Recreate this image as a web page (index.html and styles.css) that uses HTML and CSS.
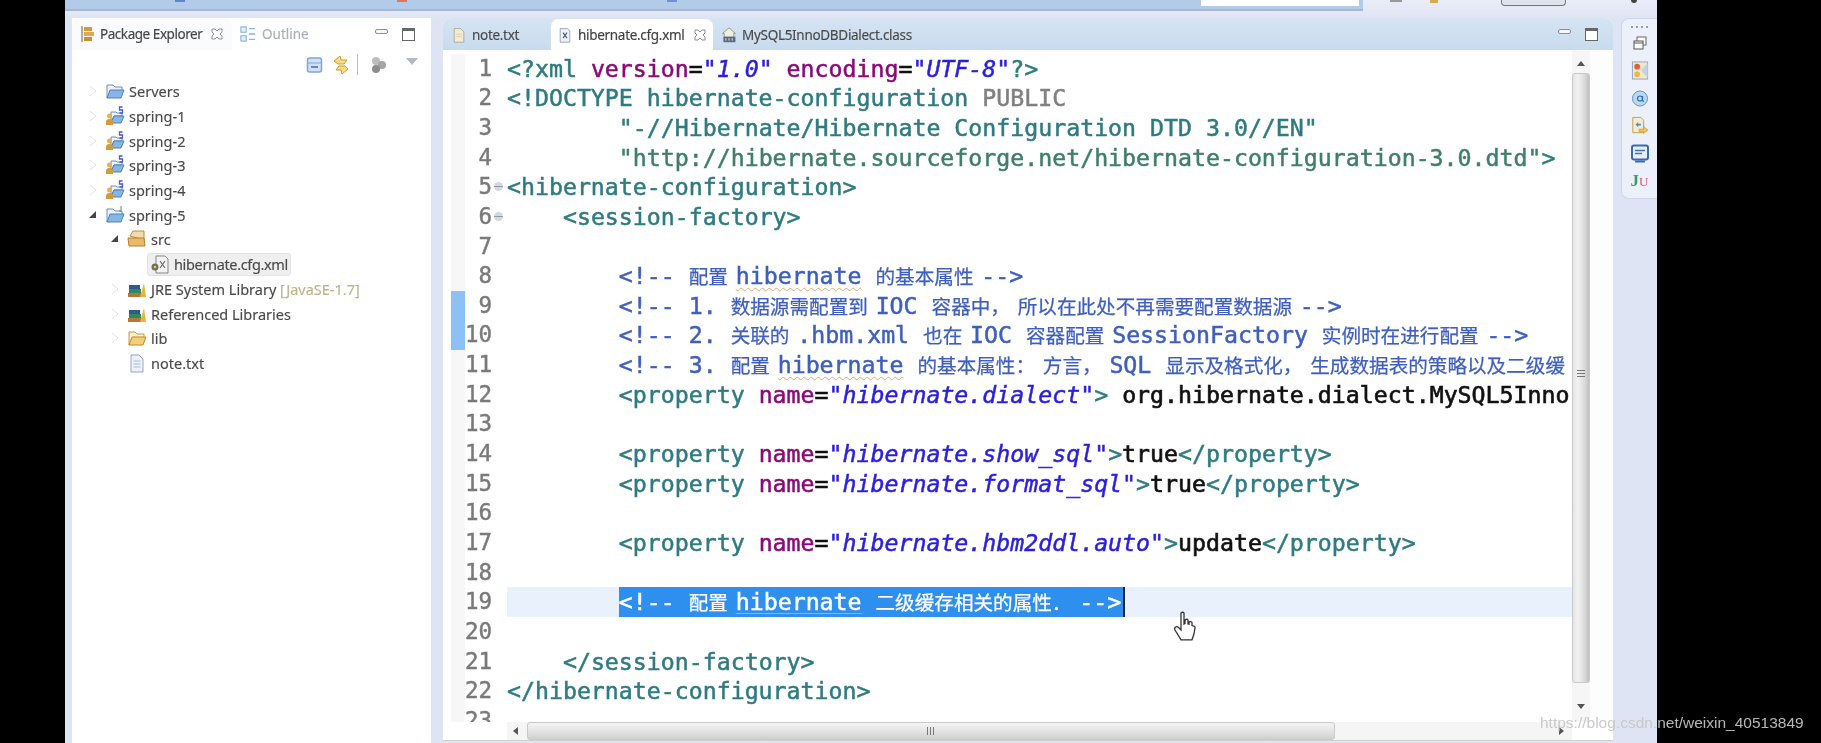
FILE: index.html
```html
<!DOCTYPE html>
<html lang="zh">
<head>
<meta charset="utf-8">
<title>hibernate.cfg.xml</title>
<link rel="stylesheet" href="styles.css">
</head>
<body>
<svg class="defs" width="0" height="0">
  <symbol id="i-folder" viewBox="0 0 20 20"><path d="M2 4h6l2 2h7v4H6l-4 7z" fill="#eef3fa" stroke="#6b8fb8"/><path d="M2 17l3-8h14l-3 8z" fill="#86b5e6" stroke="#4f82b8"/></symbol>
  <symbol id="i-spring" viewBox="0 0 20 20"><path d="M6 6h5l1 1h5v3H9l-3 6z" fill="#eef3fa" stroke="#6b8fb8"/><path d="M6 17l3-7h10l-3 7z" fill="#86b5e6" stroke="#4f82b8"/><circle cx="4.500" cy="10" r="2.500" fill="#e9b04c"/><path d="M1 19v-3q0-3 3.500-3T8 16v3z" fill="#d59a35"/><path d="M17.500 1h-3v3h3v3h-3" fill="none" stroke="#4a55d8" stroke-width="1.300"/></symbol>
  <symbol id="i-proj" viewBox="0 0 20 20"><path d="M2 4h6l2 2h7v4H6l-4 7z" fill="#eef3fa" stroke="#6b8fb8"/><path d="M2 17l3-8h14l-3 8z" fill="#86b5e6" stroke="#4f82b8"/><path d="M16 1v5h-2" fill="none" stroke="#6a7fae"/></symbol>
  <symbol id="i-src" viewBox="0 0 20 20"><path d="M3 7l3-5h11v9z" fill="#f1dcae" stroke="#b98b3d"/><path d="M1 9h16l1 8H2z" fill="#eab96a" stroke="#b57f2c"/></symbol>
  <symbol id="i-yfolder" viewBox="0 0 20 20"><path d="M2 4h6l2 2h7v4H6l-4 7z" fill="#fbf1d0" stroke="#c29a4a"/><path d="M2 17l3-8h14l-3 8z" fill="#f3cf79" stroke="#bb8a2e"/></symbol>
  <symbol id="i-lib" viewBox="0 0 20 20"><rect x="1" y="14" width="13" height="4" fill="#b5763a"/><rect x="2" y="10" width="12" height="4" fill="#2f8a5a"/><rect x="2" y="6" width="11" height="4" fill="#2c5a8e"/><path d="M13 18l4-14 2 14z" fill="#e8b23e"/></symbol>
  <symbol id="i-doc" viewBox="0 0 20 20"><path d="M4 2h8l4 4v13H4z" fill="#eef1fa" stroke="#9ba6bf"/><path d="M6.500 8h7M6.500 11h7M6.500 14h7" stroke="#a9bbdc"/></symbol>
  <symbol id="i-note" viewBox="0 0 20 20"><path d="M4 2h8l4 4v13H4z" fill="#f4ecd2" stroke="#a9a083"/><path d="M6.500 9h7M6.500 12h7" stroke="#d4c9a2"/></symbol>
  <symbol id="i-xml" viewBox="0 0 20 20"><path d="M4 2h9l3 3v14H4z" fill="#eef1f8" stroke="#8a95ab"/><path d="M7.500 7l5 7M12.500 7l-5 7" stroke="#48587a" stroke-width="1.400"/></symbol>
  <symbol id="i-cfg" viewBox="0 0 20 20"><path d="M6 2h9l3 3v14H6z" fill="#f3f3f3" stroke="#858585"/><path d="M10 7l5 7M15 7l-5 7" stroke="#6a6a6a" stroke-width="1.200"/><circle cx="5" cy="13" r="3.500" fill="#6f6f5a"/><circle cx="5" cy="13" r="1.300" fill="#e4c97f"/></symbol>
  <symbol id="i-class" viewBox="0 0 20 20"><path d="M10 1L2 8h2v5h12V8h2z" fill="#f1efe4" stroke="#8d8467"/><rect x="3" y="12" width="15" height="7" fill="#5c6a80"/><path d="M6 14v3M10 14v3M14 14v3" stroke="#fff"/></symbol>
  <symbol id="i-close" viewBox="0 0 14 14"><path d="M2 2h3l2 2 2-2h3v3l-2 2 2 2v3H9L7 10l-2 2H2V9l2-2-2-2z" fill="#fff" stroke="#8f8f8f"/></symbol>
  <symbol id="i-pkg" viewBox="0 0 16 18"><path d="M2 1v16" stroke="#7a5a30"/><rect x="4" y="2" width="8" height="4" fill="#d8963c"/><rect x="4" y="7" width="10" height="4" fill="#e3a84f"/><rect x="4" y="12" width="8" height="4" fill="#cf8c33"/></symbol>
  <symbol id="i-outline" viewBox="0 0 18 18"><rect x="1" y="1" width="6" height="6" fill="#e4effa" stroke="#6ea3d4"/><rect x="1" y="11" width="6" height="6" fill="#e4effa" stroke="#6ea3d4"/><path d="M10 3h7M10 9h7M10 15h7" stroke="#8eb5da" stroke-width="1.500"/></symbol>
  <symbol id="i-collapse" viewBox="0 0 18 18"><rect x="1.500" y="2" width="14" height="14" rx="2" fill="#cfe0f5" stroke="#7ea7d6" stroke-width="1.500"/><path d="M1.500 7h14" stroke="#7ea7d6"/><path d="M5 11h7" stroke="#4b75a8" stroke-width="1.600"/></symbol>
  <symbol id="i-link" viewBox="0 0 20 20"><path d="M3 6l6-5 1 4h6l-3 4H7z" fill="#f7dd8a" stroke="#cf9c2d"/><path d="M17 14l-6 5-1-4H5l3-4h6z" fill="#f7dd8a" stroke="#cf9c2d"/></symbol>
  <symbol id="i-balls" viewBox="0 0 18 18"><circle cx="6" cy="5" r="4" fill="#bdbdbd"/><circle cx="12" cy="9" r="4" fill="#a5a5a5"/><circle cx="6" cy="13" r="4" fill="#8c8c8c"/></symbol>
  <symbol id="i-restore" viewBox="0 0 16 16"><rect x="5" y="2" width="9" height="8" fill="#fff" stroke="#666"/><rect x="2" y="6" width="9" height="8" fill="#fff" stroke="#555"/><path d="M2 8h9" stroke="#555"/></symbol>
  <symbol id="i-persp" viewBox="0 0 18 20"><rect x="1" y="1" width="16" height="18" fill="#f6e6c4" stroke="#8fa3c4"/><circle cx="6" cy="6" r="3" fill="#e25b3c"/><circle cx="6" cy="14" r="3" fill="#e9b650"/><path d="M10 10l7-8v16z" fill="#bcd4ee"/></symbol>
  <symbol id="i-at" viewBox="0 0 18 18"><circle cx="9" cy="9" r="7.500" fill="#bcd7f0" stroke="#5d96cf"/><path d="M11.500 6.500v4q0 1.500 1.500 1M11.500 9a2.500 2.500 0 1 1-5 0 2.500 2.500 0 1 1 5 0" fill="none" stroke="#2f6fb0" stroke-width="1.200"/></symbol>
  <symbol id="i-docarrow" viewBox="0 0 20 20"><path d="M2 1h9l3 3v14H2z" fill="#f6eccb" stroke="#b59a56"/><path d="M5 9l3-3v2h3v2H8v2z" fill="#4f8fd0"/><path d="M9 14h5v-3l5 4-5 4v-2H9z" fill="#eec15a" stroke="#c2922e" stroke-width=".6"/></symbol>
  <symbol id="i-screen" viewBox="0 0 18 18"><rect x="1" y="1" width="16" height="14" rx="2" fill="#e6eef9" stroke="#3b6bae" stroke-width="2"/><path d="M4 6h10M4 9h7" stroke="#4a72ab" stroke-width="1.500"/><path d="M4 16h10v2H4z" fill="#3b6bae"/></symbol>
</svg>

<div class="app">
  <header class="topbar">
    <div class="tb-main">
      <i class="fleck f1"></i><i class="fleck f2"></i><i class="fleck f3"></i>
      <div class="search"></div>
    </div>
    <div class="tb-right">
      <i class="fleck f4"></i><i class="fleck f5"></i>
      <div class="persp-btn"></div>
      <i class="tb-dot"></i>
    </div>
  </header>

  <main class="main">
    <section class="explorer">
      <div class="ex-tabs">
        <div class="ex-tab">
          <svg class="ic16"><use href="#i-pkg"/></svg>
          <span class="ex-title">Package Explorer</span>
          <svg class="ic-close"><use href="#i-close"/></svg>
        </div>
        <div class="ex-tab2">
          <svg class="ic16"><use href="#i-outline"/></svg>
          <span class="ex-outline">Outline</span>
        </div>
        <div class="winbtns">
          <span class="minbtn"></span><span class="maxbtn"></span>
        </div>
      </div>
      <div class="ex-tools">
        <svg class="ic18"><use href="#i-collapse"/></svg>
        <svg class="ic20"><use href="#i-link"/></svg>
        <span class="tool-sep"></span>
        <svg class="ic18 bal"><use href="#i-balls"/></svg>
        <span class="menu-tri"></span>
      </div>
      <ul class="tree">
        <li class="row"><span class="tw closed"></span><svg class="ic"><use href="#i-folder"/></svg><span>Servers</span></li>
        <li class="row"><span class="tw closed"></span><svg class="ic"><use href="#i-spring"/></svg><span>spring-1</span></li>
        <li class="row"><span class="tw closed"></span><svg class="ic"><use href="#i-spring"/></svg><span>spring-2</span></li>
        <li class="row"><span class="tw closed"></span><svg class="ic"><use href="#i-spring"/></svg><span>spring-3</span></li>
        <li class="row"><span class="tw closed"></span><svg class="ic"><use href="#i-spring"/></svg><span>spring-4</span></li>
        <li class="row"><span class="tw open"></span><svg class="ic"><use href="#i-proj"/></svg><span>spring-5</span></li>
        <li class="row l1"><span class="tw open"></span><svg class="ic"><use href="#i-src"/></svg><span>src</span></li>
        <li class="row l2"><span class="tw"></span><span class="sel"><svg class="ic"><use href="#i-cfg"/></svg><span>hibernate.cfg.xml</span></span></li>
        <li class="row l1"><span class="tw closed"></span><svg class="ic"><use href="#i-lib"/></svg><span>JRE System Library <em class="dim">[JavaSE-1.7]</em></span></li>
        <li class="row l1"><span class="tw closed"></span><svg class="ic"><use href="#i-lib"/></svg><span>Referenced Libraries</span></li>
        <li class="row l1"><span class="tw closed"></span><svg class="ic"><use href="#i-yfolder"/></svg><span>lib</span></li>
        <li class="row l1"><span class="tw"></span><svg class="ic"><use href="#i-doc"/></svg><span>note.txt</span></li>
      </ul>
    </section>

    <section class="editor">
      <div class="ed-tabs">
        <div class="ed-tab t-note"><svg class="ic16"><use href="#i-note"/></svg><span>note.txt</span></div>
        <div class="ed-tab t-active"><svg class="ic16"><use href="#i-xml"/></svg><span>hibernate.cfg.xml</span><svg class="ic-close"><use href="#i-close"/></svg></div>
        <div class="ed-tab t-class"><svg class="ic16"><use href="#i-class"/></svg><span>MySQL5InnoDBDialect.class</span></div>
        <div class="winbtns ed-win"><span class="minbtn"></span><span class="maxbtn"></span></div>
      </div>
      <div class="ed-body">
        <div class="lines">
          <div class="line"><span class="ln">1</span><code class="code"><span class="t">&lt;?xml </span><span class="a">version</span><span class="k">=</span><span class="s">"1.0"</span> <span class="a">encoding</span><span class="k">=</span><span class="s">"UTF-8"</span><span class="t">?&gt;</span></code></div>
          <div class="line"><span class="ln">2</span><code class="code"><span class="t">&lt;!DOCTYPE hibernate-configuration </span><span class="d">PUBLIC</span></code></div>
          <div class="line"><span class="ln">3</span><code class="code">        <span class="t">"-//Hibernate/Hibernate Configuration DTD 3.0//EN"</span></code></div>
          <div class="line"><span class="ln">4</span><code class="code">        <span class="g">"http://hibernate.sourceforge.net/hibernate-configuration-3.0.dtd"</span><span class="t">&gt;</span></code></div>
          <div class="line"><span class="ln fold">5</span><code class="code"><span class="t">&lt;hibernate-configuration&gt;</span></code></div>
          <div class="line"><span class="ln fold">6</span><code class="code">    <span class="t">&lt;session-factory&gt;</span></code></div>
          <div class="line"><span class="ln">7</span><code class="code"></code></div>
          <div class="line"><span class="ln">8</span><code class="code">        <span class="c">&lt;!-- <span class="cjk">配置 </span><span class="sq">hibernate</span> <span class="cjk">的基本属性 </span>--&gt;</span></code></div>
          <div class="line"><span class="ln diff">9</span><code class="code">        <span class="c">&lt;!-- 1. <span class="cjk">数据源需配置到 </span>IOC <span class="cjk">容器中， 所以在此处不再需要配置数据源 </span>--&gt;</span></code></div>
          <div class="line"><span class="ln diff">10</span><code class="code">        <span class="c">&lt;!-- 2. <span class="cjk">关联的 </span>.hbm.xml <span class="cjk">也在 </span>IOC <span class="cjk">容器配置 </span>SessionFactory <span class="cjk">实例时在进行配置 </span>--&gt;</span></code></div>
          <div class="line"><span class="ln">11</span><code class="code">        <span class="c">&lt;!-- 3. <span class="cjk">配置 </span><span class="sq">hibernate</span> <span class="cjk">的基本属性： 方言， </span>SQL <span class="cjk">显示及格式化， 生成数据表的策略以及二级缓</span></span></code></div>
          <div class="line"><span class="ln">12</span><code class="code">        <span class="t">&lt;property </span><span class="a">name</span><span class="k">=</span><span class="s">"hibernate.dialect"</span><span class="t">&gt;</span> <span class="k">org.hibernate.dialect.MySQL5Inno</span></code></div>
          <div class="line"><span class="ln">13</span><code class="code"></code></div>
          <div class="line"><span class="ln">14</span><code class="code">        <span class="t">&lt;property </span><span class="a">name</span><span class="k">=</span><span class="s">"hibernate.show_sql"</span><span class="t">&gt;</span><span class="k">true</span><span class="t">&lt;/property&gt;</span></code></div>
          <div class="line"><span class="ln">15</span><code class="code">        <span class="t">&lt;property </span><span class="a">name</span><span class="k">=</span><span class="s">"hibernate.format_sql"</span><span class="t">&gt;</span><span class="k">true</span><span class="t">&lt;/property&gt;</span></code></div>
          <div class="line"><span class="ln">16</span><code class="code"></code></div>
          <div class="line"><span class="ln">17</span><code class="code">        <span class="t">&lt;property </span><span class="a">name</span><span class="k">=</span><span class="s">"hibernate.hbm2ddl.auto"</span><span class="t">&gt;</span><span class="k">update</span><span class="t">&lt;/property&gt;</span></code></div>
          <div class="line"><span class="ln">18</span><code class="code"></code></div>
          <div class="line current"><span class="ln">19</span><code class="code">        <span class="selected">&lt;!-- <span class="cjk">配置 </span><span class="usq">hibernate</span> <span class="cjk">二级缓存相关的属性． </span>--&gt;</span></code></div>
          <div class="line"><span class="ln">20</span><code class="code"></code></div>
          <div class="line"><span class="ln">21</span><code class="code">    <span class="t">&lt;/session-factory&gt;</span></code></div>
          <div class="line"><span class="ln">22</span><code class="code"><span class="t">&lt;/hibernate-configuration&gt;</span></code></div>
          <div class="line"><span class="ln">23</span><code class="code"></code></div>
        </div>
        <div class="vbar">
          <span class="arr up"></span>
          <div class="vthumb"><span class="vgrip"></span></div>
          <span class="arr down"></span>
        </div>
        <div class="rstrip"></div>
      </div>
      <div class="hbar-row">
        <div class="hbar">
          <span class="arr left"></span>
          <div class="hthumb"><span class="hgrip"></span></div>
          <span class="arr right"></span>
        </div>
      </div>
    </section>

    <aside class="trim">
      <span class="trim-dots"></span>
      <svg class="ic16"><use href="#i-restore"/></svg>
      <svg class="ic-lg"><use href="#i-persp"/></svg>
      <svg class="ic-lg"><use href="#i-at"/></svg>
      <svg class="ic-lg"><use href="#i-docarrow"/></svg>
      <svg class="ic-lg"><use href="#i-screen"/></svg>
      <span class="ju"><b>J</b><i>U</i></span>
    </aside>
  </main>
</div>

<svg class="hand" viewBox="0 0 24 32"><path d="M8 2q2-1.500 3 0v11l1-.5V9q2-1.500 3 0v4l1 .2V11q2-1.200 3 .5v3l1 .3q2 0 2 2l-1 6-2 6H8L2 19q-1-2 .5-3t3 .5L8 19z" fill="#fff" stroke="#333" stroke-width="1.300"/></svg>
<div class="watermark">https://blog.csdn.net/weixin_40513849</div>
</body>
</html>
```
FILE: styles.css
```css
* { box-sizing: border-box; }
html, body { margin: 0; height: 100%; }
body { background: #000; overflow: hidden; position: relative; }
.defs { position: absolute; }
.app {
  margin-left: 65px; width: 1592px; height: 743px;
  background: #dfe4f4; overflow: hidden;
  display: flex; flex-direction: column;
  font-family: "Noto Sans", "Open Sans", sans-serif;
  filter: blur(.6px);
}
.topbar { display: flex; height: 18px; background: linear-gradient(#e9edf8, #e4e8f6 60%, #dfe4f4); flex: none; }
.tb-main {
  width: 1298px; height: 11px; background: #b1cbe8; border-bottom: 2px solid #aab6cf;
  display: flex; align-items: flex-start;
}
.fleck { display: block; height: 2px; width: 10px; flex: none; }
.f1 { margin-left: 110px; background: #5e86cf; }
.f2 { margin-left: 212px; background: #d9785a; }
.f3 { margin-left: 260px; background: #6f8fd8; }
.search { margin-left: 524px; width: 158px; height: 6px; background: #fff; flex: none; }
.tb-right { flex: 1; display: flex; align-items: flex-start; }
.f4 { margin-left: 27px; width: 12px; background: #9a9a9a; }
.f5 { margin-left: 28px; width: 8px; height: 3px; background: #d9a94e; }
.persp-btn { margin-left: 63px; width: 65px; height: 6px; background: #dfe3ee; border: 1px solid #777; border-top: 0; border-radius: 0 0 4px 4px; flex: none; }
.tb-dot { margin-left: 65px; width: 6px; height: 3px; border-radius: 0 0 4px 4px; background: #444; flex: none; }

.main { flex: 1; display: flex; align-items: flex-start; padding-left: 7px; min-height: 0; }

/* explorer */
.explorer { width: 359px; height: 725px; background: #fff; border-radius: 8px 8px 0 0; flex: none; color: #4a4a4a; -webkit-text-stroke: .15px currentColor; }
.ex-tabs { height: 32px; display: flex; align-items: center; background: #fff; position: relative; }
.ex-tab { width: 160px; height: 32px; display: flex; align-items: center; padding-left: 8px; background: #fafbfd; border-radius: 8px 8px 0 0; }
.ex-title { font-size: 13.500px; margin-left: 4px; letter-spacing: -.45px; color: #454545; white-space: nowrap; }
.ic-close { width: 14px; height: 14px; margin-left: 8px; flex: none; }
.ic16 { width: 16px; height: 18px; flex: none; }
.ic18 { width: 18px; height: 18px; flex: none; }
.ic20 { width: 20px; height: 20px; flex: none; }
.ex-tab2 { display: flex; align-items: center; padding-left: 8px; }
.ex-outline { font-size: 13.500px; margin-left: 6px; color: #a9b0b8; }
.winbtns { margin-left: auto; display: flex; align-items: center; gap: 14px; padding-right: 16px; }
.minbtn { width: 13px; height: 5px; background: #f4f6fb; border: 1px solid #8b8f98; border-radius: 2px; margin-top: -6px; }
.maxbtn { width: 13px; height: 13px; background: #fff; border: 1px solid #666; border-top-width: 3px; }
.ex-tools { height: 29px; display: flex; align-items: center; padding-left: 234px; }
.ex-tools .ic20 { margin-left: 7px; }
.tool-sep { width: 1px; height: 21px; background: #bbb; margin-left: 6px; }
.bal { margin-left: 12px; }
.menu-tri { width: 0; height: 0; border: 6px solid transparent; border-top: 7px solid #b4b8c2; border-bottom: 0; margin-left: 18px; margin-top: -7px; }

.tree { list-style: none; margin: 0; padding: 0; font-size: 14.500px; }
.row { height: 24.700px; display: flex; align-items: center; padding-left: 16px; white-space: nowrap; }
.row.l1 { padding-left: 38px; }
.row.l2 { padding-left: 60px; }
.tw { width: 15px; height: 12px; flex: none; margin-right: 2px; position: relative; }
.tw.closed::before { content: ""; display: block; width: 0; height: 0; border: 5px solid transparent; border-left: 6px solid #fff; border-right: 0; filter: drop-shadow(0 0 .6px #777); margin: 1px 0 0 2px; }
.tw.open::before { content: ""; display: block; width: 0; height: 0; border-left: 7px solid transparent; border-bottom: 7px solid #444; margin: 2px 0 0 1px; }
.ic { width: 20px; height: 20px; flex: none; margin-right: 4px; }
.sel { display: flex; align-items: center; height: 23px; margin-left: -2px; padding: 0 2px; background: #efefef; border: 1px solid #e2e2e2; border-radius: 3px; letter-spacing: -.35px; }
.dim { font-style: normal; color: #c0b28a; }

/* editor */
.editor { width: 1170px; margin-left: 12px; height: 723px; flex: none; background: #fff; border-radius: 8px 8px 0 0; overflow: hidden; display: flex; flex-direction: column; }
.ed-tabs { height: 32px; flex: none; display: flex; align-items: flex-end; background: linear-gradient(#d6e4f3, #c8dbee); font-size: 13.500px; color: #4a4a4a; -webkit-text-stroke: .15px currentColor; }
.ed-tab { display: flex; align-items: center; height: 31px; letter-spacing: -.3px; white-space: nowrap; }
.ed-tab span { margin-left: 5px; }
.t-note { width: 108px; padding-left: 8px; }
.t-active { width: 162px; padding-left: 6px; background: #fff; border-radius: 7px 7px 0 0; color: #404040; }
.t-active .ic-close { margin-left: 8px; }
.t-class { padding-left: 8px; }
.ed-win { padding-right: 15px; align-self: center; }
.ed-body { flex: 1; min-height: 0; display: flex; padding-top: 3.700px; background: #fff; }
.lines { width: 1129px; flex: none; overflow: hidden; font-family: "DejaVu Sans Mono", monospace; font-size: 23.220px; }
.line { height: 29.650px; line-height: 29.650px; display: flex; white-space: pre; }
.ln {
  width: 64px; flex: none; text-align: right; padding-right: 15px; color: #7a7a7a; font-size: 22.500px; position: relative;
  background: linear-gradient(90deg, #fff 8px, #f7f7f7 8px, #f7f7f7 22px, #fff 22px);
  -webkit-text-stroke: .45px currentColor;
}
.ln.diff { background: linear-gradient(90deg, #fff 8px, #8dc0f5 8px, #8dc0f5 22px, #fff 22px); }
.ln.fold::after { content: ""; position: absolute; right: 4px; top: 10px; width: 9px; height: 9px; border-radius: 50%; background: linear-gradient(#d3d9e0 0 40%, #8c9aa8 40% 60%, #d3d9e0 60%); }
.code { flex: 1; min-width: 0; font: inherit; -webkit-text-stroke: .5px currentColor; }
.current .code { background: #e8f1fc; }
.t { color: #2f7b80; }
.g { color: #3f7f6a; }
.a { color: #8a0a78; }
.s { color: #2a1fe0; font-style: italic; }
.k { color: #111; -webkit-text-stroke: .65px currentColor; }
.d { color: #808080; }
.c { color: #3f5fbf; }
.cjk { font-family: "Noto Sans CJK SC", sans-serif; font-size: 19.600px; word-spacing: 3.400px; -webkit-text-stroke: .25px currentColor; }
.sq { text-decoration: underline wavy #e0a878 1px; text-underline-offset: 3px; }
.usq { text-decoration: underline #9fb4cf 1px; text-underline-offset: 3px; }
.selected { display: inline-block; height: 29.650px; vertical-align: top; background: #2f8fee; color: #fff; border-right: 2px solid #1c2430; padding-right: 2px; }

.vbar { width: 18px; flex: none; background: #f6f6f6; display: flex; flex-direction: column; align-items: center; margin-top: -3.700px; }
.arr { width: 0; height: 0; flex: none; display: block; }
.arr.up { margin-top: 11px; border: 4px solid transparent; border-bottom: 5px solid #555; border-top: 0; }
.arr.down { margin-top: 21px; border: 4px solid transparent; border-top: 5px solid #555; border-bottom: 0; }
.vthumb { margin-top: 7px; width: 18px; height: 610px; background: linear-gradient(90deg, #e4e4e4, #f2f2f2 30%, #dcdcdc 70%, #c0c0c0); border: 1px solid #c9c9c9; border-radius: 3px; display: flex; align-items: flex-start; justify-content: center; flex: none; }
.vgrip { margin-top: 296px; width: 8px; height: 9px; background: repeating-linear-gradient(#777 0 1px, transparent 1px 3px); }
.rstrip { flex: 1; background: #fdfdfd; }
.hbar-row { height: 19px; flex: none; padding-left: 64px; padding-right: 41px; border-bottom: 1px solid #d0d0d0; }
.hbar { height: 18px; background: #f5f5f5; display: flex; align-items: center; }
.arr.left { margin-left: 6px; border: 4px solid transparent; border-right: 5px solid #555; border-left: 0; }
.arr.right { margin-left: 224px; border: 4px solid transparent; border-left: 5px solid #555; border-right: 0; }
.hthumb { margin-left: 9px; width: 808px; height: 18px; background: linear-gradient(#f4f4f4, #e6e6e6 45%, #cfcfcf); border: 1px solid #c9c9c9; border-radius: 3px; display: flex; align-items: center; justify-content: center; flex: none; }
.hgrip { width: 9px; height: 8px; background: repeating-linear-gradient(90deg, #777 0 1px, transparent 1px 3px); }

/* trim */
.trim { width: 36px; height: 181px; margin-left: 8px; flex: none; background: #ecf0fb; border: 1px solid #cfd6e6; border-right: 0; border-radius: 8px 0 0 8px; display: flex; flex-direction: column; align-items: center; padding-top: 7px; }
.trim-dots { width: 18px; height: 2px; background: repeating-linear-gradient(90deg, #99a 0 2px, transparent 2px 5px); margin-bottom: 7px; }
.trim .ic16 { height: 16px; margin-bottom: 10px; }
.ic-lg { width: 18px; height: 19px; margin-bottom: 8.500px; flex: none; }
.ju { font-family: "Liberation Serif", serif; font-size: 17px; line-height: 20px; margin-top: 0; }
.ju b { color: #3c9a6b; }
.ju i { color: #d85a6a; font-style: normal; font-size: 13px; }

.hand { position: absolute; left: 1173px; top: 611px; width: 24px; height: 32px; filter: blur(.4px); }
.watermark { position: absolute; left: 1540px; top: 712px; font-family: "Liberation Sans", sans-serif; font-size: 15.500px; line-height: 22px; color: #c6c6c6; white-space: nowrap; opacity: .92; filter: blur(.3px); }
```
